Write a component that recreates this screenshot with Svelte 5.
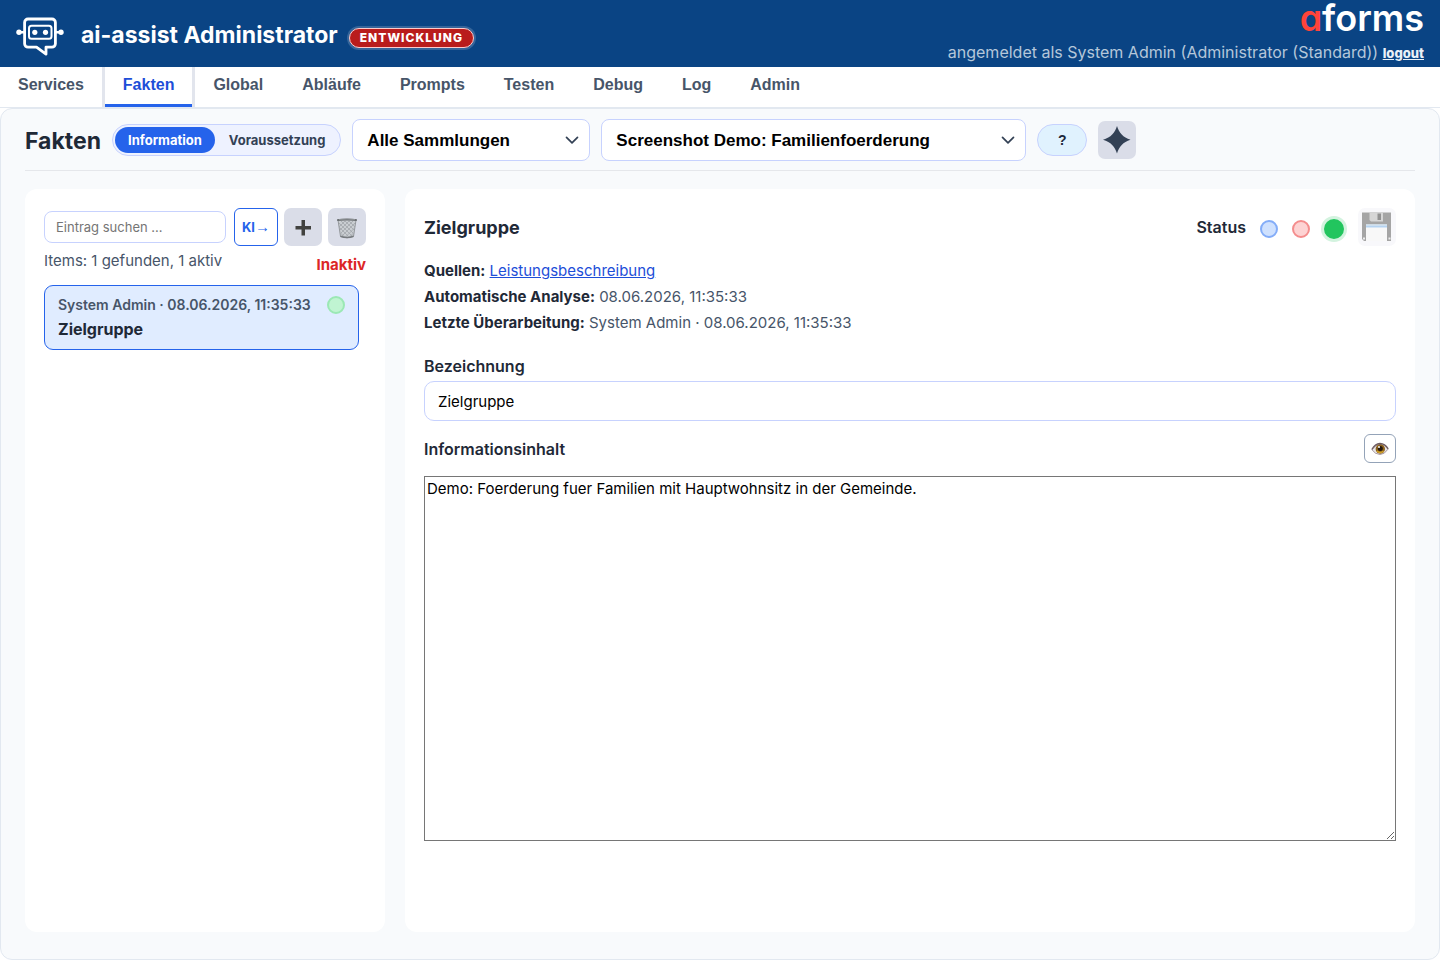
<script>
  const tabs = ['Services', 'Fakten', 'Global', 'Abläufe', 'Prompts', 'Testen', 'Debug', 'Log', 'Admin'];
  let activeTab = $state('Fakten');
  let mode = $state('Information');
  let status = $state('aktiv');
  let title = $state('Zielgruppe');
  let content = $state('Demo: Foerderung fuer Familien mit Hauptwohnsitz in der Gemeinde.');
</script>

{#snippet chevron()}
  <svg class="chevron" viewBox="0 0 14 14" width="14" height="14" aria-hidden="true">
    <path d="M1.500 4.300 L7 9.800 L12.500 4.300" fill="none" stroke="#334155" stroke-width="1.700" stroke-linecap="round" stroke-linejoin="round" />
  </svg>
{/snippet}

<header class="top">
  <svg class="robot" viewBox="0 0 48 40" width="48" height="40" aria-hidden="true">
    <g fill="none" stroke="#fff" stroke-linejoin="round" stroke-linecap="round">
      <path stroke-width="2.800" d="M12 3h24a3.400 3.400 0 0 1 3.400 3.400v21.400a3.400 3.400 0 0 1-3.400 3.400h-6v7l-9.500-7h-8.500a3.400 3.400 0 0 1-3.400-3.400v-21.400a3.400 3.400 0 0 1 3.400-3.400z" />
      <rect stroke-width="2" x="13" y="9.700" width="22.500" height="13" rx="2.500" />
      <path stroke-width="2.500" d="M3 16.300h5M40 16.300h5" />
    </g>
    <g fill="#fff">
      <circle cx="3" cy="16.300" r="2.700" /><circle cx="45" cy="16.300" r="2.700" />
      <circle cx="18.800" cy="16.300" r="2.600" /><circle cx="29.500" cy="16.300" r="2.600" />
    </g>
  </svg>
  <h1>ai-assist Administrator</h1>
  <span class="env">ENTWICKLUNG</span>
  <div class="account">
    <div class="brand"><span>a</span>forms</div>
    <div class="user">angemeldet als System Admin (Administrator (Standard)) <a href="#logout">logout</a></div>
  </div>
</header>

<nav>
  {#each tabs as tab}
    <button class="tab" class:active={tab === activeTab} onclick={() => (activeTab = tab)}>{tab}</button>
  {/each}
</nav>

<main>
  <div class="toolbar">
    <h2>Fakten</h2>
    <div class="toggle">
      {#each ['Information', 'Voraussetzung'] as name}
        <button class:on={mode === name} onclick={() => (mode = name)}>{name}</button>
      {/each}
    </div>
    <div class="picker collection">
      <select aria-label="Sammlung"><option>Alle Sammlungen</option></select>
      {@render chevron()}
    </div>
    <div class="picker service">
      <select aria-label="Service"><option>Screenshot Demo: Familienfoerderung</option></select>
      {@render chevron()}
    </div>
    <button class="help" aria-label="Hilfe">?</button>
    <button class="icon" aria-label="KI-Analyse">
      <svg viewBox="0 0 38 38" width="38" height="38" aria-hidden="true">
        <path fill="#334155" d="M19 5C21.200 12 25 16.300 32.500 18.700C25 21.100 21.200 25.500 19 32.500C16.800 25.500 13 21.100 5 18.700C13 16.300 16.800 12 19 5Z" />
      </svg>
    </button>
  </div>

  <div class="columns">
    <aside class="panel">
      <div class="tools">
        <input class="search" type="search" placeholder="Eintrag suchen ..." aria-label="Eintrag suchen" />
        <div class="actions">
          <button class="ki">KI<span>→</span></button>
          <button class="icon" aria-label="Neuer Eintrag">
            <svg viewBox="0 0 38 38" width="38" height="38" aria-hidden="true">
              <path fill="#42423f" d="M17.500 12h3.500v6h6v3.500h-6v6h-3.500v-6h-6v-3.500h6z" />
            </svg>
          </button>
          <button class="icon" aria-label="Eintrag löschen">
            <svg viewBox="0 0 38 38" width="38" height="38" aria-hidden="true">
              <path d="M10 12L12.500 28.500Q19 31 25.500 28.500L28 12z" fill="#c9cdd1" stroke="#94989c" stroke-width="1" />
              <path d="M13 13l12 12M17 13l9 9M21 13l6 6M11 15l13 13M11.500 19.500l9 9M12.500 25l4 4M25 13L13 25M21 13l-9 9M17 13l-6 6M27 15L14 28M26.500 20l-9 9M25.500 25l-4 4" stroke="#9ca1a6" stroke-width=".7" />
              <path d="M12.500 28.300Q19 30.800 25.500 28.300" fill="none" stroke="#777b7f" stroke-width="1.500" />
              <path d="M9 11.200Q19 9.600 29 11.200L28.700 13Q19 11.600 9.300 13z" fill="#676b6e" />
              <path d="M11 11.500Q19 10.500 27 11.500" fill="none" stroke="#a4a8ab" stroke-width=".7" />
            </svg>
          </button>
        </div>
      </div>
      <div class="summary">
        <span>Items: 1 gefunden, 1 aktiv</span>
        <strong>Inaktiv</strong>
      </div>
      <button class="entry">
        <span class="entry-meta">System Admin · 08.06.2026, 11:35:33</span>
        <span class="entry-name">Zielgruppe</span>
        <i class="dot"></i>
      </button>
    </aside>

    <section class="panel">
      <div class="detail-head">
        <h3>Zielgruppe</h3>
        <div class="status" role="radiogroup" aria-label="Status">
          <span>Status</span>
          <input type="radio" class="blue" name="status" value="neu" aria-label="Neu" bind:group={status} />
          <input type="radio" class="red" name="status" value="inaktiv" aria-label="Inaktiv" bind:group={status} />
          <input type="radio" class="green" name="status" value="aktiv" aria-label="Aktiv" bind:group={status} />
        </div>
        <button class="icon save" aria-label="Speichern">
          <svg viewBox="0 0 38 38" width="38" height="38" aria-hidden="true">
            <path d="M4 4.500h29v28.500h-27l-2-2z" fill="#a5a5a5" />
            <path d="M11.500 4.500h13.500v9h-12l-1.500-1.500z" fill="#d6d6d6" />
            <rect x="19.500" y="5.500" width="3.500" height="6.500" fill="#929292" />
            <rect x="8" y="16" width="21" height="17" fill="#f8f8f8" />
            <rect x="8" y="16" width="21" height="1.500" fill="#cfdbe4" />
            <rect x="8" y="17.500" width="21" height="2" fill="#b5d3f1" />
            <rect x="5" y="29.500" width="2" height="2" fill="#ececec" />
            <rect x="30.500" y="29.500" width="2" height="2" fill="#ececec" />
          </svg>
        </button>
      </div>

      <div class="meta">
        <div><b>Quellen:</b> <a href="#quelle">Leistungsbeschreibung</a></div>
        <div><b>Automatische Analyse:</b> 08.06.2026, 11:35:33</div>
        <div><b>Letzte Überarbeitung:</b> System Admin · 08.06.2026, 11:35:33</div>
      </div>

      <label for="title">Bezeichnung</label>
      <input id="title" class="title" type="text" bind:value={title} />

      <div class="content-head">
        <label for="content">Informationsinhalt</label>
        <button class="eye" aria-label="Vorschau">
          <svg viewBox="0 0 18 14" width="18" height="14" aria-hidden="true">
            <path d="M1 7.800Q4.500 2.500 9 2.300Q14 2.500 17 7.200Q13.500 12.500 9 12.500Q4 12.300 1 7.800z" fill="#e9e6e8" stroke="#99858b" stroke-width=".8" />
            <circle cx="9.300" cy="7" r="4.700" fill="#8d621b" />
            <path d="M6 9a4.200 4.200 0 0 0 6.500 0" fill="none" stroke="#d1a32b" stroke-width="1.400" />
            <circle cx="9.300" cy="6.500" r="2.500" fill="#24180f" />
            <circle cx="8" cy="5" r="1" fill="#fff" />
            <path d="M.8 7.500Q4 1.800 9 1.500Q14 1.600 17.200 6.800" fill="none" stroke="#6d5b60" stroke-width="1.300" />
          </svg>
        </button>
      </div>
      <textarea id="content" bind:value={content}></textarea>
    </section>
  </div>
</main>

<style>
  :global(body) {
    background: #fff;
    color: #1f2937;
    font-family: Inter, 'Liberation Sans', sans-serif;
    font-size: 16px;
  }
  :global(*) { box-sizing: border-box; }
  button, input, select, textarea { font-family: inherit; margin: 0; }
  button { cursor: pointer; padding: 0; }
  svg { display: block; }
  h1, h2, h3 { margin: 0; }

  .top {
    display: flex;
    align-items: center;
    height: 67px;
    padding: 0 16px;
    background: #0a4484;
    color: #fff;
  }
  .robot { margin-top: 4px; }
  h1 { margin: 2px 11px 0 17px; font-size: 23px; line-height: 32px; font-weight: 700; white-space: nowrap; }
  .env {
    margin-top: 9px;
    padding: 0 10px;
    border: 1px solid #fecaca;
    border-radius: 12px;
    box-shadow: 0 0 0 2px rgba(255, 255, 255, .18);
    background: #b91c1c;
    font-size: 12px;
    line-height: 18px;
    font-weight: 800;
    letter-spacing: 1px;
  }
  .account { margin-left: auto; text-align: right; white-space: nowrap; }
  .brand {
    font-size: 36px;
    line-height: 34px;
    font-weight: 600;
    font-feature-settings: 'cv11';
  }
  .brand span { color: #ff443a; }
  .user { margin-top: 4px; padding-bottom: 1px; color: #b5c7da; line-height: 26px; }
  .user a { color: #e8f0f8; font-size: 13px; font-weight: 800; }

  nav { display: flex; height: 41px; border-bottom: 1px solid #e2e8f0; }
  .tab {
    height: 40px;
    margin-left: -3px;
    padding: 0 18px 5px;
    border: 3px solid transparent;
    border-width: 0 3px;
    background: none;
    color: #475569;
    font: 700 16px/35px 'Liberation Sans', Arial, sans-serif;
  }
  .tab.active {
    border-color: #e2e5ed;
    color: #1d4ed8;
    box-shadow: inset 0 -3px #2563eb;
  }

  main {
    min-height: calc(100vh - 108px);
    padding: 10px 24px 27px;
    border: 1px solid #e2e8f0;
    border-radius: 12px;
    background: #f8fafc;
    display: flex;
    flex-direction: column;
  }
  .toolbar {
    display: flex;
    align-items: center;
    gap: 11px;
    padding-bottom: 9px;
    border-bottom: 1px solid #e5e7eb;
  }
  h2 { padding-top: 2px; font-size: 23px; line-height: 32px; }
  .toggle {
    display: flex;
    gap: 1px;
    height: 32px;
    padding: 2px;
    border: 1px solid #c7d2fe;
    border-radius: 16px;
    background: #eef2ff;
  }
  .toggle button {
    padding: 0 13px;
    border: 0;
    border-radius: 13px;
    background: none;
    color: #334155;
    font-size: 13px;
    font-weight: 700;
  }
  .toggle button.on { background: #2563eb; color: #fff; }
  .picker { display: grid; align-items: center; }
  .picker select, .picker .chevron { grid-area: 1 / 1; }
  .picker select {
    width: 100%;
    height: 42px;
    padding: 0 36px 0 14px;
    border: 1px solid #c7d2fe;
    border-radius: 8px;
    background: #fff;
    color: #000;
    font: 700 17px 'Liberation Sans', Arial, sans-serif;
    appearance: none;
  }
  .chevron { justify-self: end; margin-right: 11px; pointer-events: none; }
  .collection { width: 238px; }
  .service { width: 425px; }
  .help {
    width: 50px;
    height: 32px;
    border: 1px solid #c7d2fe;
    border-radius: 16px;
    background: #e0f2fe;
    color: #1e293b;
    font: 700 14px 'Liberation Sans', Arial, sans-serif;
  }
  .icon {
    flex: none;
    width: 38px;
    height: 38px;
    border: 0;
    border-radius: 7px;
    background: #dadde8;
  }

  .columns {
    flex: 1;
    display: grid;
    grid-template-columns: 360px 1fr;
    gap: 20px;
    margin-top: 18px;
  }
  .panel { padding: 19px; border-radius: 12px; background: #fff; }
  .tools { display: flex; align-items: center; gap: 8px; }
  .search {
    flex: 1;
    min-width: 0;
    height: 32px;
    padding: 0 11px;
    border: 1px solid #c7d2fe;
    border-radius: 8px;
    background: #fff;
    font-size: 13px;
    outline: 0;
  }
  .search::placeholder { color: #757575; }
  .actions { display: flex; gap: 6px; }
  .ki {
    width: 44px;
    height: 38px;
    border: 1px solid #2563eb;
    border-radius: 6px;
    background: #fff;
    color: #2563eb;
    font-size: 13px;
    line-height: 16px;
    font-weight: 700;
  }
  .ki span { font-family: 'Liberation Sans', Arial, sans-serif; font-size: 15px; font-weight: 400; }
  .summary {
    display: flex;
    justify-content: space-between;
    margin-top: 4px;
    color: #475569;
    font-size: 15px;
    line-height: 22px;
  }
  .summary strong { margin-top: 4px; color: #dc2626; }
  .entry {
    display: grid;
    grid-template-columns: 1fr 18px;
    align-items: center;
    width: calc(100% - 7px);
    margin-top: 9px;
    padding: 7px 13px 8px;
    border: 1px solid #2563eb;
    border-radius: 9px;
    background: #e0ecff;
    text-align: left;
    line-height: 24px;
  }
  .entry-meta { grid-area: 1 / 1; color: #475569; font-size: 14px; font-weight: 600; }
  .entry-name { grid-area: 2 / 1; color: #1f2937; font-size: 16px; font-weight: 700; }
  .dot {
    grid-area: 1 / 2;
    width: 18px;
    height: 18px;
    border: 2px solid #9be8b5;
    border-radius: 50%;
    background: #c0f4d2;
  }

  .detail-head { display: flex; align-items: center; }
  h3 { flex: 1; padding-top: 2px; font-size: 18px; line-height: 26px; }
  .status { display: flex; align-items: center; gap: 14px; font-weight: 600; }
  .status input {
    appearance: none;
    width: 18px;
    height: 18px;
    margin-top: 3px;
    border: 2px solid;
    border-radius: 50%;
  }
  .status .blue { border-color: #84adf8; background: #cfe1fe; }
  .status .red { border-color: #f48d8d; background: #fdd3d3; }
  .status .green { width: 20px; height: 20px; border-color: #22c55e; background: #22c55e; box-shadow: 0 0 0 3px #d3f3df; }
  .save { margin-left: 14px; background: #f8f8fb; }
  .meta { margin: 12px 0 16px; color: #475569; font-size: 15px; line-height: 26px; }
  .meta b { color: #1f2937; }
  .meta a { color: #1d4ed8; }
  label { display: block; font-weight: 600; line-height: 28px; }
  .title {
    display: block;
    width: 100%;
    height: 40px;
    margin-top: 1px;
    padding: 0 13px;
    border: 1px solid #c7d2fe;
    border-radius: 10px;
    background: #fff;
    color: #000;
    font-size: 15px;
  }
  .content-head { display: flex; align-items: center; justify-content: space-between; margin: 13px 0; }
  .eye {
    display: grid;
    place-items: center;
    width: 32px;
    height: 29px;
    border: 1px solid #94a3b8;
    border-radius: 6px;
    background: #fff;
  }
  textarea {
    display: block;
    width: 100%;
    height: 365px;
    padding: 2px;
    border: 1px solid #767676;
    border-radius: 0;
    background: #fff;
    color: #000;
    font-size: 15px;
    line-height: 19px;
    resize: vertical;
  }
</style>
